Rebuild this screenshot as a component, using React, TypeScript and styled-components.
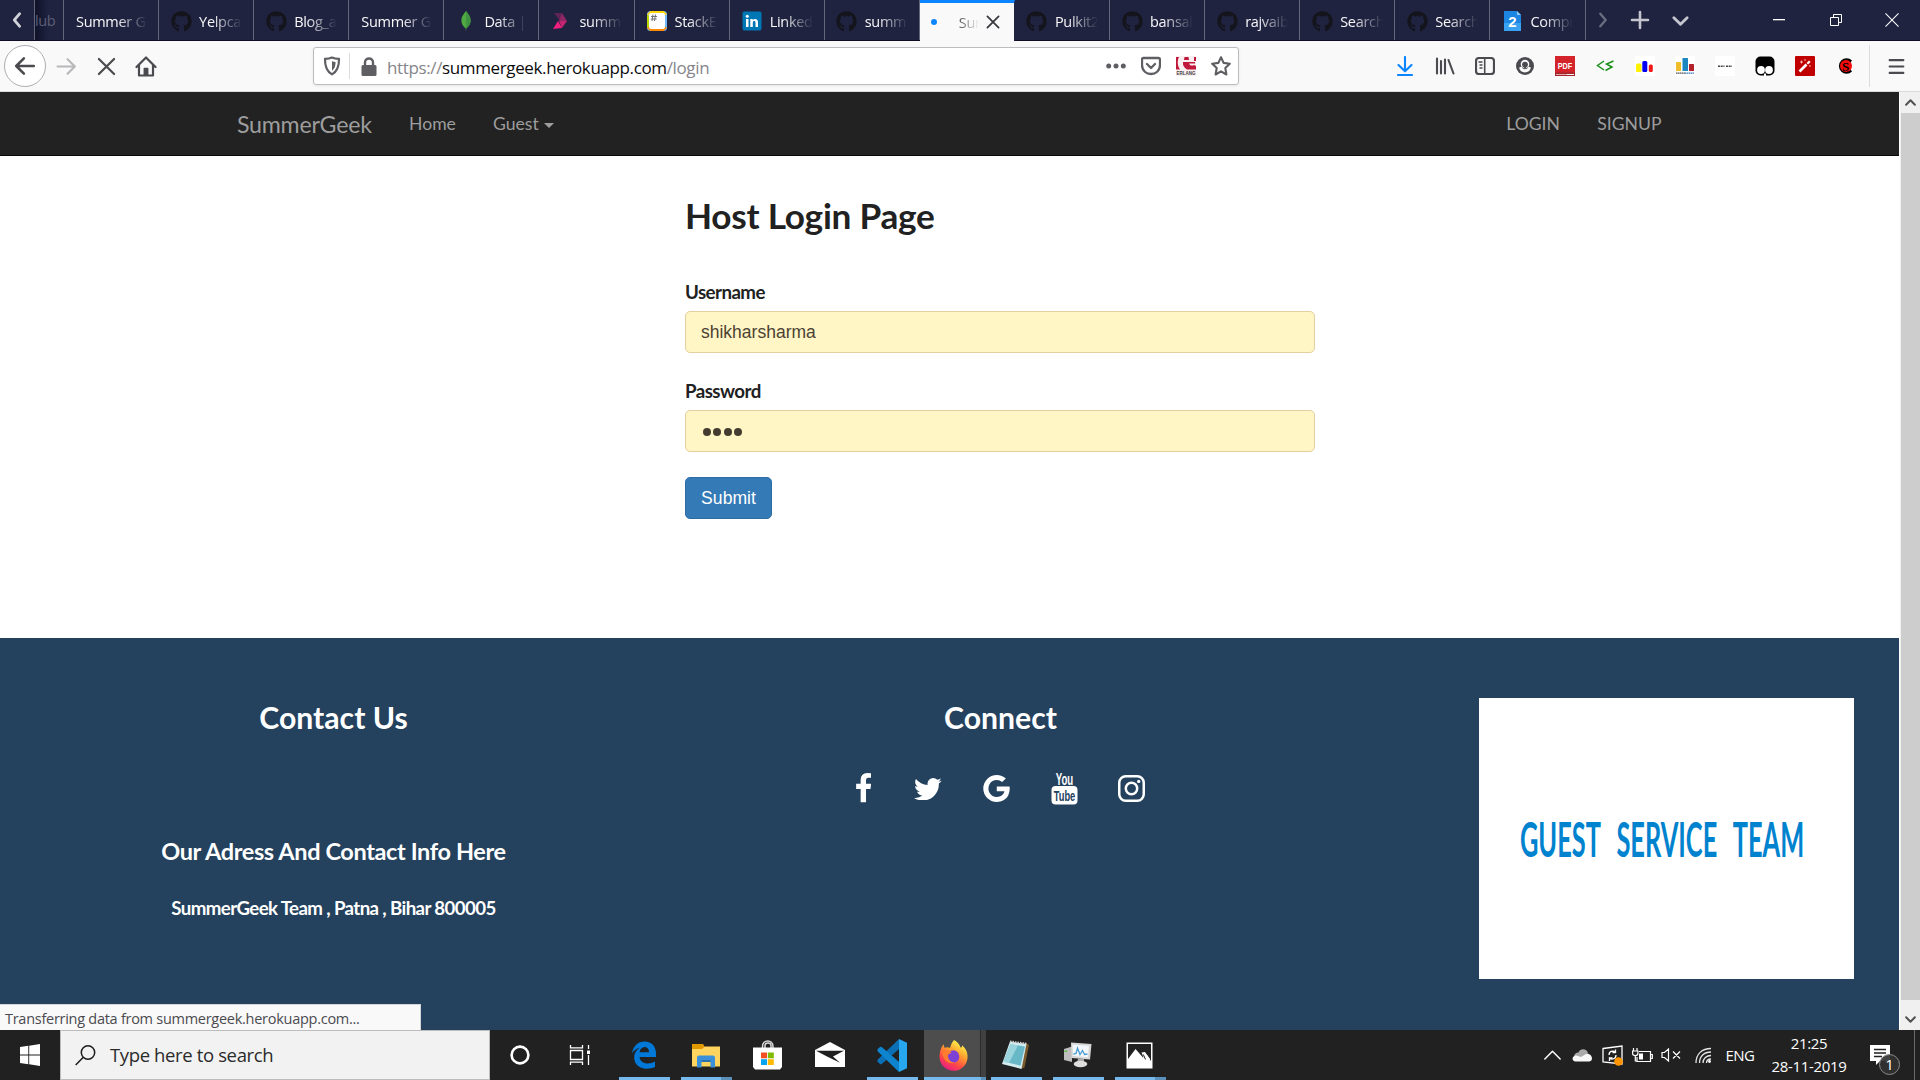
import React from "react";
import styled, { createGlobalStyle } from "styled-components";
import { FaGithub } from "react-icons/fa";

const ui = `"Open Sans", "Noto Sans", sans-serif`;

const Global = createGlobalStyle`
  * { box-sizing: border-box; }
  html, body { margin: 0; padding: 0; overflow: hidden; }
  body { font-family: ${ui}; background: #fff; }
  svg { display: block; flex: none; }
`;

const Screen = styled.div`
  width: 1920px;
  height: 1080px;
  display: flex;
  flex-direction: column;
  overflow: hidden;
`;

/* ---------- tab strip ---------- */
const TabStrip = styled.div`
  height: 41px;
  flex: none;
  display: flex;
  background: #202340;
  border-bottom: 1px solid #0d0d24;
`;
const ScrollLeft = styled.div`
  width: 35px;
  flex: none;
  display: flex;
  align-items: center;
  justify-content: center;
  border-right: 1px solid #64667a;
`;
const Stub = styled.div`
  width: 29px;
  flex: none;
  border-right: 1px solid #64667a;
  background: linear-gradient(90deg, #10122a, #202340 14px);
  color: #5d5f78;
  font-size: 14.5px;
  line-height: 42px;
  overflow: hidden;
  letter-spacing: -0.4px;
`;
const Tab = styled.div<{ $active?: boolean }>`
  width: 95.1px;
  flex: none;
  height: ${(p) => (p.$active ? 41 : 40)}px;
  display: flex;
  align-items: center;
  padding-left: 12px;
  padding-top: ${(p) => (p.$active ? 0 : 2)}px;
  background: ${(p) => (p.$active ? "#f9f9fa" : "transparent")};
  border-top: ${(p) => (p.$active ? "3px solid #0a84ff" : "0")};
  border-right: 1px solid ${(p) => (p.$active ? "#202340" : "#64667a")};
  color: ${(p) => (p.$active ? "#555" : "#f9f9fa")};
`;
const Favicon = styled.span`
  width: 20px;
  height: 20px;
  margin-right: 8px;
  flex: none;
  display: flex;
  align-items: center;
  justify-content: center;
  color: #14141c;
`;
const TabLabel = styled.span<{ $w: number }>`
  width: ${(p) => p.$w}px;
  font-size: 14.5px;
  letter-spacing: -0.3px;
  line-height: 20px;
  padding-top: 1px;
  white-space: nowrap;
  overflow: hidden;
  mask-image: linear-gradient(90deg, #000 ${(p) => Math.max(0, p.$w - 30)}px, transparent ${(p) => p.$w}px);
`;
const StripTools = styled.div`
  flex: 1;
  display: flex;
  align-items: center;
`;
const Slot = styled.div<{ $w: number }>`
  width: ${(p) => p.$w}px;
  flex: none;
  display: flex;
  align-items: center;
  justify-content: center;
`;

/* ---------- toolbar ---------- */
const Toolbar = styled.div`
  height: 51px;
  flex: none;
  display: flex;
  align-items: center;
  background: #f9f9fa;
  border-bottom: 1px solid #d9d9db;
  padding-left: 4px;
`;
const BackButton = styled.div`
  width: 42px;
  height: 42px;
  flex: none;
  border-radius: 50%;
  border: 1px solid #aeaeb0;
  background: #fff;
  display: flex;
  align-items: center;
  justify-content: center;
`;
const UrlBar = styled.div`
  width: 926px;
  height: 38px;
  margin-left: 147px;
  flex: none;
  display: flex;
  align-items: center;
  background: #fff;
  border: 1px solid #bdbdbf;
  border-radius: 3px;
  box-shadow: 0 1px 3px rgba(0, 0, 0, 0.08);
`;
const Divider = styled.div<{ $h: number }>`
  width: 1px;
  height: ${(p) => p.$h}px;
  background: #dcdcde;
`;
const Url = styled.div`
  flex: 1;
  font-size: 17px;
  letter-spacing: -0.37px;
  line-height: 24px;
  padding-top: 3px;
  color: #85858a;
  white-space: nowrap;
  b { font-weight: 400; color: #0c0c0d; }
`;
const Extensions = styled.div`
  margin-left: 146px;
  flex: none;
  display: flex;
  align-items: center;
`;

/* ---------- page ---------- */
const Viewport = styled.div`
  flex: 1;
  display: flex;
  min-height: 0;
  font-family: Lato, sans-serif;
`;
const Page = styled.div`
  width: 1899px;
  position: relative;
  display: flex;
  flex-direction: column;
  background: #fff;
`;
const Scrollbar = styled.div`
  width: 21px;
  background: #f0f0f0;
  display: flex;
  flex-direction: column;
  align-items: center;
  border-left: 1px solid #fff;
`;
const ScrollArrow = styled.div<{ $bottom?: boolean }>`
  height: 21px;
  display: flex;
  align-items: center;
  margin-top: ${(p) => (p.$bottom ? "auto" : 0)};
`;
const Thumb = styled.div`
  width: 19px;
  height: 887px;
  background: #cdcdcd;
`;
const Navbar = styled.nav`
  height: 64px;
  flex: none;
  display: flex;
  align-items: center;
  background: #222;
  border-bottom: 1px solid #080808;
  color: #9d9d9d;
  font-size: 17.6px;
  padding: 0 236px 0 237px;
`;
const Brand = styled.div`
  font-size: 23.2px;
  letter-spacing: -0.25px;
  width: 172px;
`;
const NavItem = styled.div<{ $w?: number }>`
  width: ${(p) => (p.$w ? p.$w + "px" : "auto")};
  display: flex;
  align-items: center;
`;
const Caret = styled.span`
  margin-left: 5px;
  margin-top: 3px;
  border: 5px solid transparent;
  border-top-color: #9d9d9d;
  border-bottom: 0;
`;
const Main = styled.main`
  height: 482px;
  flex: none;
  padding: 37px 0 0 685px;
  color: #212121;
`;
const Title = styled.h2`
  margin: 0 0 43px;
  font-size: 35.2px;
  letter-spacing: -0.25px;
  line-height: 44px;
  font-weight: 700;
`;
const Label = styled.label`
  display: block;
  font-size: 18.7px;
  letter-spacing: -0.55px;
  line-height: 24px;
  font-weight: 700;
  margin-bottom: 7px;
`;
const Field = styled.div`
  width: 630px;
  height: 42px;
  margin-bottom: 26px;
  padding: 0 15px;
  display: flex;
  align-items: center;
  border: 1px solid #e6cf9f;
  border-radius: 5px;
  background: #fff5c5;
  color: #4c4233;
  font: 17.5px "Liberation Sans", Arial, sans-serif;
`;
const Dots = styled.div`
  display: flex;
  gap: 2.4px;
  padding: 2px 0 0 2px;
  i { width: 8px; height: 8px; border-radius: 50%; background: #443c30; }
`;
const Submit = styled.button`
  width: 87px;
  height: 42px;
  margin-top: -1px;
  padding: 0;
  display: block;
  border: 1px solid #2e6da4;
  border-radius: 5px;
  background: #337ab7;
  color: #fff;
  font: 17.6px "Liberation Sans", Arial, sans-serif;
`;
const Footer = styled.footer`
  flex: 1;
  display: grid;
  grid-template-columns: 667px 667px 1fr;
  background: #24415d;
  color: #fff;
  text-align: center;
`;
const Column = styled.div`
  padding-top: 60px;
`;
const H3 = styled.h3`
  margin: -1px 0 0;
  font-size: 30.2px;
  line-height: 40px;
  font-weight: 700;
`;
const H4 = styled.h4`
  margin: 98px 0 0;
  font-size: 23.5px;
  letter-spacing: -0.38px;
  line-height: 32px;
  font-weight: 700;
`;
const H5 = styled.h5`
  margin: 29px 0 0;
  font-size: 18.7px;
  letter-spacing: -0.62px;
  line-height: 24px;
  font-weight: 700;
`;
const Social = styled.div`
  display: flex;
  align-items: center;
  padding: 34px 0 0 188.5px;
  height: 68px;
`;
const SocialIcon = styled.div<{ $gap: number; $top?: number }>`
  margin-right: ${(p) => p.$gap}px;
  margin-top: ${(p) => p.$top ?? 0}px;
  fill: #fff;
`;
const TeamCard = styled.div`
  width: 375px;
  height: 281px;
  margin-left: 145px;
  background: #fff;
  display: flex;
  align-items: center;
  justify-content: center;
`;
const TeamName = styled.div`
  color: #0083cf;
  font: 700 30px/40px Lato, sans-serif;
  white-space: nowrap;
  word-spacing: 12px;
  transform: translate(-4px, -1.5px) scale(0.846, 1.62);
`;
const Status = styled.div`
  position: absolute;
  left: 0;
  bottom: 0;
  width: 421px;
  height: 26px;
  padding-left: 5px;
  background: #f9f9fa;
  border-top: 1px solid #d5d5d7;
  border-right: 1px solid #d5d5d7;
  color: #4a4a4f;
  font: 14.5px/27px ${ui};
  letter-spacing: -0.27px;
`;

/* ---------- taskbar ---------- */
const Taskbar = styled.div`
  height: 50px;
  flex: none;
  display: flex;
  background: #212121;
  color: #fff;
`;
const Search = styled.div`
  width: 430px;
  height: 50px;
  display: flex;
  align-items: center;
  padding-left: 14px;
  background: #f2f2f2;
  border: 1px solid #bcbcbc;
  color: #2b2b2b;
  font-size: 18.5px;
  letter-spacing: -0.37px;
  span { margin-left: 14px; margin-top: -1px; }
`;
const TaskButton = styled.div<{ $active?: boolean }>`
  width: 62px;
  height: 50px;
  flex: none;
  display: flex;
  flex-direction: column;
  align-items: center;
  background: ${(p) =>
    p.$active ? "linear-gradient(90deg, #4d4d4d 56px, #2c2c2c 56px, #2c2c2c 57px, #404040 57px)" : "transparent"};
`;
const Glyph = styled.div`
  height: 47px;
  padding: 3px 2px 0 0;
  display: flex;
  align-items: center;
`;
const Underline = styled.div<{ $w: number; $split?: number }>`
  width: ${(p) => p.$w}px;
  height: 3px;
  background: linear-gradient(90deg, #76b9ed ${(p) => p.$split ?? p.$w}px, #5a90ba ${(p) => p.$split ?? p.$w}px);
`;
const Tray = styled.div`
  margin-left: auto;
  display: flex;
  align-items: center;
`;
const Lang = styled.div`
  width: 40px;
  font-size: 15px;
  letter-spacing: -0.5px;
  text-align: center;
`;
const Clock = styled.div`
  width: 92px;
  margin-left: 3px;
  text-align: center;
  font-size: 15px;
  line-height: 23px;
  letter-spacing: -0.35px;
`;
const Notice = styled.div`
  position: relative;
  width: 36px;
  height: 50px;
  margin-left: 14px;
  padding: 15px 0 0 1px;
`;
const Badge = styled.div`
  position: absolute;
  left: 10px;
  top: 24px;
  width: 21px;
  height: 21px;
  border-radius: 50%;
  border: 1px solid #8b8b8b;
  background: rgba(50, 50, 50, 0.92);
  font-size: 15px;
  line-height: 19px;
  text-align: center;
`;
const Peek = styled.div`
  width: 6px;
  height: 50px;
  margin-left: 9px;
  border-left: 1px solid #6a6a6a;
`;

type G = { d: string; s?: number; w?: number; c?: string };
/* Stroked line icon on a 20 unit grid. */
const Line = ({ d, s = 20, w = 2, c = "#4a4a4f" }: G) => (
  <svg width={s} height={s} viewBox="0 0 20 20" fill="none" stroke={c} strokeWidth={w} strokeLinecap="round" strokeLinejoin="round">
    <path d={d} />
  </svg>
);

const Github = () => <FaGithub size={21} />;
const Mongo = () => (
  <svg width="12" height="20" viewBox="0 0 12 20">
    <path d="M6 0C8 3 10.600 5 10.600 9.500C10.600 13.500 8 16 6.400 17.200L6 20L5.600 17.200C4 16 1.400 13.500 1.400 9.500C1.400 5 4 3 6 0Z" fill="#4faa41" />
    <path d="M6 0C8 3 10.600 5 10.600 9.500C10.600 13.500 8 16 6.300 17.200Z" fill="#3f9143" />
  </svg>
);
const Pink = () => (
  <svg width="18" height="18" viewBox="0 0 18 18">
    <path d="M2 1L10 1L8 9Z" fill="#5d2455" />
    <path d="M10 1L15 9H7Z" fill="#8e2764" />
    <path d="M7 9H15L10 16Z" fill="#c42472" />
    <path d="M1 17L6 9L10 16Z" fill="#f0207f" />
  </svg>
);
const StackEdit = () => (
  <svg width="20" height="20" viewBox="0 0 20 20">
    <rect width="20" height="20" rx="3.500" fill="#75b7fd" />
    <path d="M3.500 0H16.500L20 3L10 10L0 3Z" fill="#ffd700" />
    <path d="M0 3.500V16.500L3 20L9 10Z" fill="#bbd500" />
    <path d="M3.500 20H16.500L20 17L10 10L0 17Z" fill="#ff8a00" />
    <rect x="2" y="2" width="16" height="16" rx="2" fill="#fff" />
    <path d="M6 3.500L5 10M8.500 3.500L7.500 10M4 5.500H10M3.700 8H9.700" stroke="#737373" strokeWidth="1" />
  </svg>
);
const LinkedIn = () => (
  <svg width="20" height="20" viewBox="0 0 20 20">
    <rect x=".5" y=".5" width="19" height="19" rx="2" fill="#0077b5" />
    <path d="M4 8H6.500V16H4ZM8.300 8H10.700V9.200C12 7.200 16 7.300 16 11V16H13.500V11.700C13.500 9.200 10.800 9.500 10.800 11.700V16H8.300Z" fill="#fff" />
    <circle cx="5.250" cy="5.200" r="1.500" fill="#fff" />
  </svg>
);
const Two = () => (
  <svg width="17" height="20" viewBox="0 0 17 20">
    <path d="M0 0H13L17 4V20H0Z" fill="#1d86e3" />
    <path d="M0 12H17V20H0Z" fill="#3aa2f2" />
    <path d="M13 0V4H17Z" fill="#8cc8f8" />
    <text x="8.500" y="15.500" textAnchor="middle" fontFamily="Liberation Sans" fontWeight="700" fontSize="15" fill="#fff">2</text>
  </svg>
);

const tabsBefore: [string, React.FC | null][] = [
  ["Summer Geek", null], ["Yelpcamp", Github], ["Blog_app", Github], ["Summer Geek", null],
  ["Data | Mongo", Mongo], ["summergeek", Pink], ["StackEdit", StackEdit], ["LinkedIn", LinkedIn], ["summergeek", Github],
];
const tabsAfter: [string, React.FC | null][] = [
  ["Pulkit2110", Github], ["bansal-x", Github], ["rajvaibhav", Github], ["Search", Github], ["Search", Github], ["Compress", Two],
];
const renderTabs = (list: [string, React.FC | null][]) =>
  list.map(([label, Icon], i) => (
    <Tab key={i}>
      {Icon && <Favicon><Icon /></Favicon>}
      <TabLabel $w={Icon ? 43 : 71}>{label}</TabLabel>
    </Tab>
  ));

const Shield = () => (
  <svg width="18" height="20" viewBox="0 0 18 20">
    <path d="M9 1.500C11 2.500 14 2.800 16 2.800C16.200 10 15 15 9 18.400C3 15 1.800 10 2 2.800C4 2.800 7 2.500 9 1.500Z" fill="none" stroke="#5f5f63" strokeWidth="2.200" strokeLinejoin="round" />
    <path d="M9 5.200C10.200 5.700 11.500 5.900 12.600 6C12.500 10 11.600 12.800 9 14.700Z" fill="#5f5f63" />
  </svg>
);
const Lock = () => (
  <svg width="16" height="19" viewBox="0 0 16 19">
    <path d="M4 9V5.500C4 .2 12 .2 12 5.500V9" fill="none" stroke="#5f5f63" strokeWidth="2.400" />
    <rect x=".5" y="8" width="15" height="11" rx="1.500" fill="#5f5f63" />
  </svg>
);
const Pocket = () => (
  <Line w={2.3} c="#5f5f63" d="M2.500 2H17.500Q19 2 19 3.500V9C19 21 1 21 1 9V3.500Q1 2 2.500 2ZM6 8L10 12L14 8" />
);
const Erlang = () => (
  <svg width="20" height="20" viewBox="0 0 20 20">
    <rect width="20" height="20" fill="#fbeef0" />
    <path d="M0 1H3C1 5 1.500 10 4 13.500H0ZM18 1H20V5H18ZM8.500 1H12.500L13 4H8ZM7 6H19V7.500H13C14 10 17 10 18 9L20 10V13.500H11C8 12 6.500 9 7 6Z" fill="#c0183a" />
    <text x="10" y="19" textAnchor="middle" fontFamily="Liberation Sans" fontWeight="700" fontSize="5.200" textLength="19" lengthAdjust="spacingAndGlyphs" fill="#444">ERLANG</text>
  </svg>
);
const Bars = ({ c, labelled }: { c: string[]; labelled?: boolean }) => (
  <svg width="20" height="20" viewBox="0 0 20 20">
    <rect width="20" height="20" fill="#fff" />
    {labelled ? (
      <>
        <rect x="1" y="6" width="5" height="9" rx=".6" fill={c[0]} />
        <rect x="7.500" y="2" width="5.500" height="13" rx=".6" fill={c[1]} />
        <rect x="14" y="8" width="5" height="7" rx=".6" fill={c[2]} />
        <path d="M1 17.200H10" stroke="#555" strokeWidth="1.300" strokeDasharray="1.500 .4" />
        <path d="M10 17.200H19" stroke="#3b7fc0" strokeWidth="1.300" strokeDasharray="1.500 .4" />
      </>
    ) : (
      <>
        <rect x="1" y="7.500" width="5.500" height="8.500" rx="1.500" fill={c[0]} />
        <rect x="7.300" y="5" width="5" height="11" rx="1.500" fill={c[1]} />
        <rect x="13.800" y="8.500" width="4" height="7.500" rx="1.500" fill={c[2]} />
      </>
    )}
  </svg>
);

const exts: React.ReactNode[] = [
  <Line c="#0a84ff" w={2.1} d="M10 1V15M3.500 9L10 15.300L16.500 9M3 19H17" />,
  <svg width="20" height="18" viewBox="0 0 20 18" fill="none" stroke="#4a4a4f" strokeWidth="2.100" strokeLinecap="round">
    <path d="M2 1.500V16.500M6 4V16.500M10 2.500V16.500M13.500 3L18.500 16.500" />
  </svg>,
  <svg width="20" height="18" viewBox="0 0 20 18" fill="none" stroke="#4a4a4f">
    <rect x="1" y="1" width="18" height="16" rx="3" strokeWidth="2.200" />
    <path d="M9.700 1V17" strokeWidth="1.600" />
    <path d="M3.500 5H7.500M4.500 8H7.500M4.500 11H7.500" strokeWidth="1.300" />
  </svg>,
  <svg width="18" height="18" viewBox="0 0 18 18">
    <circle cx="9" cy="9" r="9" fill="#4a4a4f" />
    <path d="M3.200 10.500L5.600 9.500L6.500 11.300Q9 13 11.500 11.300L12.400 9.500L14.800 10.500C14 17 4 17 3.200 10.500Z" fill="#f9f9fa" />
    <circle cx="9" cy="7" r="4.300" fill="#f9f9fa" />
    <circle cx="9" cy="7.600" r="2.900" fill="#4a4a4f" />
    <path d="M7.200 9.500H10.800L9 11.800Z" fill="#4a4a4f" />
  </svg>,
  <svg width="20" height="20" viewBox="0 0 20 20">
    <rect width="20" height="20" fill="#d3232b" />
    <rect y="16.500" width="20" height="3.500" fill="#a3262c" />
    <path d="M1 18.500H12" stroke="#e9a5a8" strokeWidth="1" />
    <path d="M12 18.500H19" stroke="#fff" strokeWidth="1" />
    <text x="10" y="12.500" textAnchor="middle" fontFamily="Liberation Sans" fontWeight="700" fontSize="9.500" textLength="14.500" lengthAdjust="spacingAndGlyphs" fill="#fff">PDF</text>
  </svg>,
  <svg width="18" height="12" viewBox="0 0 18 12" fill="none" stroke="#1a8f1a" strokeWidth="1.500">
    <path d="M8 1L1.500 5.500L8 10M17.500 1L10.500 4L16 7L9.500 10.500" />
  </svg>,
  <Bars c={["#fff200", "#0000f5", "#f01818"]} />,
  <Bars labelled c={["#efbd27", "#1d87c2", "#b3202a"]} />,
  <svg width="20" height="20" viewBox="0 0 20 20">
    <rect width="20" height="20" fill="#fff" />
    <path d="M3 10.300H9.500M11 10.300H17" stroke="#444" strokeWidth="1.400" strokeDasharray="2 .7" />
  </svg>,
  <svg width="20" height="20" viewBox="0 0 20 20">
    <rect x=".5" y=".5" width="19" height="19" rx="5" fill="#000" />
    <circle cx="6" cy="14" r="3.900" fill="#fff" />
    <circle cx="14" cy="14" r="3.900" fill="#fff" />
    <path d="M9 17.500H11V20H9Z" fill="#fff" />
  </svg>,
  <svg width="20" height="20" viewBox="0 0 20 20">
    <rect width="20" height="20" rx="1" fill="#c00000" />
    <path d="M4.500 15.500L11.500 8.500" stroke="#fff" strokeWidth="2.600" />
    <path d="M12.300 7.700L14.800 5.200" stroke="#fff" strokeWidth="2.300" />
    <path d="M5 6H8M6.500 4.500V7.500M10 3V5M15 9V11" stroke="#f3b9b9" strokeWidth="1" />
  </svg>,
  <svg width="18" height="20" viewBox="0 0 18 20">
    <path d="M16 4.500A7.700 7.700 0 1 0 16 15.500L12 10Z" fill="#000" />
    <circle cx="10" cy="10" r="6" fill="#f50a0a" />
    <text x="9.500" y="14.500" textAnchor="middle" fontFamily="Liberation Serif" fontWeight="700" fontSize="13" fill="#000">S</text>
  </svg>,
];

const FB = "M1343 12v264h-157q-86 0-116 36t-30 108v189h293l-39 296h-254v759h-306v-759h-255v-296h255v-218q0-186 104-288.500t277-102.500q147 0 228 12z";
const TW = "M1684 408q-67 98-162 167 1 14 1 42 0 130-38 259.500t-115.500 248.500-184.500 210.500-258 146-323 54.500q-271 0-496-145 35 4 78 4 225 0 401-138-105-2-188-64.500t-114-159.500q33 5 61 5 43 0 85-11-112-23-185.500-111.500t-73.500-205.500v-4q68 38 146 41-66-44-105-115t-39-154q0-88 44-163 121 149 294.500 238.500t371.500 99.500q-8-38-8-74 0-134 94.500-228.500t228.500-94.500q140 0 236 102 109-21 205-78-37 115-142 178 93-10 186-50z";
const GO = "M896 786h725q12 67 12 128 0 217-91 387.500t-259.500 266.500-386.500 96q-157 0-299-60.500t-245-163.500-163.500-245-60.500-299 60.500-299 163.500-245 245-163.500 299-60.500q300 0 515 201l-209 201q-123-119-306-119-129 0-238.500 65t-173.500 176.500-64 243.500 64 243.500 173.500 176.500 238.500 65q87 0 160-24t120-60 82-82 51.500-87 22.500-78h-436v-264z";

/* ---------- taskbar glyphs ---------- */
const Edge = () => (
  <svg width="26" height="28" viewBox="0 0 26 28">
    <path d="M1 12.500C2 5 7 .5 13.500 .5C21 .5 25 6 25 12.500V16H8.500C9 20.500 13 22.500 16.500 22.500C19.500 22.500 22 21.700 24 20.500V26C21.500 27.200 18.500 27.700 15.500 27.700C8 27.700 3.200 23 3.200 16.500C3.200 12 5.500 8.500 9 6.700C5.500 7.200 2.800 9.300 1 12.500ZM8.600 11.200H18C18 8 16.500 6 13.500 6C11 6 9 8.200 8.600 11.200Z" fill="#0078d7" />
  </svg>
);
const Folder = () => (
  <svg width="28" height="25" viewBox="0 0 28 25">
    <path d="M0 1H11L13 4H27.500V22.500H0Z" fill="#e09a00" />
    <path d="M0 6H10L13 3.500H28V23.500H0Z" fill="#ffd45f" />
    <path d="M5 14.500Q5 12.500 7 12.500H21Q23 12.500 23 14.500V24.500H18.500V19H9.500V24.500H5Z" fill="#3a91d9" />
    <path d="M9.500 17H18.500V19H9.500Z" fill="#2b70b0" />
  </svg>
);
const Store = () => (
  <svg width="29" height="30" viewBox="0 0 29 30">
    <path d="M9.500 9V6.500C9.500 -.8 20 -.8 20 6.500V9M12 8V5.500C12 2 18 2 18 5.500V8" fill="none" stroke="#d8d8d8" strokeWidth="1.500" />
    <path d="M0 7.500H29V27L27 29.500H2L0 27Z" fill="#fff" />
    <path d="M8 12.500H14V18.300H8Z" fill="#f25022" />
    <path d="M14.800 12.500H20.800V18.300H14.800Z" fill="#7fba00" />
    <path d="M8 19.200H14V25H8Z" fill="#00a4ef" />
    <path d="M14.800 19.200H20.800V25H14.800Z" fill="#ffb900" />
  </svg>
);
const Mail = () => (
  <svg width="30" height="26" viewBox="0 0 30 26">
    <path d="M0 8L15 0L30 8V25H0Z" fill="#fff" />
    <path d="M1 8.700H29L18 14.500L25 20.800L12.500 14.800Z" fill="#1f1f1f" />
  </svg>
);
const Code = () => (
  <svg width="30" height="33" viewBox="0 0 30 30" preserveAspectRatio="none">
    <path d="M22 0L1 18.500Q-.3 20 1 21.200L3 22.800Q4 23.300 5 22.500L23 8.500Z" fill="#0a6fb4" />
    <path d="M22 30L1 11.500Q-.3 10 1 8.800L3 7.200Q4 6.700 5 7.500L23 21.500Z" fill="#0d84cd" />
    <path d="M22 0L30 3.500V26.500L22 30V8Z" fill="#27a7f0" />
  </svg>
);
const Firefox = () => (
  <svg width="29" height="31" viewBox="0 0 29 29" preserveAspectRatio="none">
    <defs>
      <linearGradient id="fx" x1=".8" y1="0" x2=".25" y2="1">
        <stop offset=".1" stopColor="#fff04a" />
        <stop offset=".4" stopColor="#ffa02e" />
        <stop offset=".7" stopColor="#ff4a45" />
        <stop offset="1" stopColor="#e5168c" />
      </linearGradient>
    </defs>
    <path d="M15 0C19 2 21 5 21.500 7C23 7.500 23 6 23.200 5C27 8.500 29 12 28.500 17C27.500 24 22 28.800 14.500 28.800C6.500 28.800 .5 23 .5 15.500C.5 11 2 7 4.500 4L5.500 7.200C8 6.500 9.500 6.500 11 7.500C12 4 13 2 15 0Z" fill="url(#fx)" />
    <circle cx="14.500" cy="15.500" r="5.800" fill="#7d42d5" />
    <path d="M3 10.500C7 8.500 9 10 12.500 11.300C12 13 9.500 12.500 9 14.500C9 19 12.500 21.500 16 20.500C11 24 4 20 3 10.500Z" fill="#ff7d2e" />
  </svg>
);
const Notepad = () => (
  <svg width="29" height="30" viewBox="0 0 29 28" preserveAspectRatio="none">
    <path d="M24 3L28 4.500L23.500 26L19 27Z" fill="#7a5a2a" />
    <path d="M9 1.500L25.500 3.500L20.500 27L1 22.500Z" fill="#d4edf1" />
    <path d="M9.500 4L24 6L19.500 24L2.500 20Z" fill="#69b8c8" />
    <path d="M9.500 4L17 5L8 21.500L2.500 20Z" fill="#9bd4dd" />
    <path d="M9 1.500L25.500 3.500" stroke="#cfcfcf" strokeWidth="2" strokeDasharray="1.500 1" />
  </svg>
);
const Monitor = () => (
  <svg width="28" height="26" viewBox="0 0 28 26">
    <path d="M0 7L8 4.500V20L0 18Z" fill="#bdbdbd" />
    <path d="M.5 8.500H3V10H.5Z" fill="#55c234" />
    <path d="M7 .5L27.500 2L26 17.500L7.500 16Z" fill="#d6d6d6" />
    <path d="M8.500 2.500L25 3.700L24 15.300L9 14Z" fill="#f1f7fb" />
    <path d="M9.500 12L12 11.500L13.500 6L16 12.500L18.500 8.500L20.500 12.500L23.500 12" fill="none" stroke="#4c9cd3" strokeWidth="1.300" />
    <path d="M14 16.500L20 17V21L13 21.500Z" fill="#aaa" />
    <ellipse cx="16.500" cy="22" rx="6.800" ry="3.300" fill="#dedede" />
  </svg>
);
const Photos = () => (
  <svg width="27" height="27" viewBox="0 0 27 27">
    <rect x=".5" y=".5" width="26" height="26" fill="#fff" />
    <path d="M2 2H25V19L21 13L17 15.500L9.500 7L2 17Z" fill="#212121" />
    <path d="M15.500 10.500L19 10L24 17V19.500L20.500 18L19 14.500L17.500 15.500Z" fill="#fff" />
    <path d="M17.300 12.500L19.500 17.500" stroke="#212121" strokeWidth="1" />
  </svg>
);

const apps: { icon: React.ReactNode; w?: number; split?: number; active?: boolean }[] = [
  { icon: <Edge />, w: 51 },
  { icon: <Folder />, w: 51, split: 40 },
  { icon: <Store /> },
  { icon: <Mail /> },
  { icon: <Code />, w: 51 },
  { icon: <Firefox />, w: 62, split: 57, active: true },
  { icon: <Notepad />, w: 51 },
  { icon: <Monitor />, w: 51 },
  { icon: <Photos />, w: 51, split: 40 },
];

export default function App() {
  return (
    <Screen>
      <Global />
      <TabStrip>
        <ScrollLeft><Line s={18} w={3} c="#d2d3da" d="M13 3L7 10L13 17" /></ScrollLeft>
        <Stub>lub</Stub>
        {renderTabs(tabsBefore)}
        <Tab $active>
          <Slot $w={5}><svg width="6" height="6"><circle cx="3" cy="3" r="3" fill="#0a84ff" /></svg></Slot>
          <Slot $w={22} />
          <TabLabel $w={20}>Summer</TabLabel>
          <Slot $w={28}><Line s={16} w={2.2} c="#38383d" d="M3 3L17 17M17 3L3 17" /></Slot>
        </Tab>
        {renderTabs(tabsAfter)}
        <StripTools>
          <Slot $w={35}><Line s={18} w={2.6} c="#6a6c80" d="M7 3L13 10L7 17" /></Slot>
          <Slot $w={38}><Line s={20} w={2.6} c="#c4c5ce" d="M10 2V18M2 10H18" /></Slot>
          <Slot $w={43}><Line s={19} w={3} c="#c4c5ce" d="M3 7L10 14L17 7" /></Slot>
          <Slot $w={48.5} />
          <Slot $w={57}><svg width="12" height="2"><rect width="12" height="1.300" fill="#fff" /></svg></Slot>
          <Slot $w={57}>
            <svg width="12" height="12" viewBox="0 0 12 12" fill="none" stroke="#fff" strokeWidth="1">
              <path d="M.5 3.500H8.500V11.500H.5ZM3.500 3V.5H11.500V8.500H9" />
            </svg>
          </Slot>
          <Slot $w={56}><Line s={14} w={1.5} c="#fff" d="M1 1L19 19M19 1L1 19" /></Slot>
        </StripTools>
      </TabStrip>

      <Toolbar>
        <BackButton><Line s={22} w={2.3} d="M2 10H18M9 3L2 10L9 17" /></BackButton>
        <Slot $w={40}><Line s={21} w={2} c="#b8b8bb" d="M1.500 10H18M11 3L18 10L11 17" /></Slot>
        <Slot $w={40}><Line s={19} w={2.3} d="M2 2L18 18M18 2L2 18" /></Slot>
        <Slot $w={40}>
          <svg width="22" height="21" viewBox="0 0 22 21" fill="none" stroke="#4a4a4f" strokeWidth="2.200" strokeLinejoin="round" strokeLinecap="round">
            <path d="M1.500 11L11 1.500L20.500 11M4 9V19.500H18V9" />
            <path d="M9.300 19V12.500H12.700V19" fill="#4a4a4f" strokeWidth="1.500" />
          </svg>
        </Slot>
        <UrlBar>
          <Slot $w={35}><Shield /></Slot>
          <Divider $h={26} />
          <Slot $w={37}><Lock /></Slot>
          <Url>https://<b>summergeek.herokuapp.com</b>/login</Url>
          <Slot $w={35}>
            <svg width="20" height="6" fill="#5f5f63"><circle cx="2.700" cy="3" r="2.500" /><circle cx="10" cy="3" r="2.500" /><circle cx="17.300" cy="3" r="2.500" /></svg>
          </Slot>
          <Slot $w={35}><Pocket /></Slot>
          <Slot $w={35}><Erlang /></Slot>
          <Slot $w={35}><Line w={2.1} c="#5f5f63" d="M10 1.300L12.600 6.900L18.800 7.700L14.300 12L15.400 18.500L10 15.300L4.600 18.500L5.700 12L1.200 7.700L7.400 6.900Z" /></Slot>
        </UrlBar>
        <Extensions>
          {exts.map((e, i) => <Slot key={i} $w={40}>{e}</Slot>)}
          <Slot $w={4} />
          <Divider $h={42} />
          <Slot $w={53}><Line s={17} w={2.6} d="M2 2.500H18M2 10H18M2 17.500H18" /></Slot>
        </Extensions>
      </Toolbar>

      <Viewport>
        <Page>
          <Navbar>
            <Brand>SummerGeek</Brand>
            <NavItem $w={84}>Home</NavItem>
            <NavItem>Guest<Caret /></NavItem>
            <Slot $w={952.5} />
            <NavItem $w={91}>LOGIN</NavItem>
            <NavItem>SIGNUP</NavItem>
          </Navbar>
          <Main>
            <Title>Host Login Page</Title>
            <Label>Username</Label>
            <Field>shikharsharma</Field>
            <Label>Password</Label>
            <Field><Dots><i /><i /><i /><i /></Dots></Field>
            <Submit>Submit</Submit>
          </Main>
          <Footer>
            <Column>
              <H3>Contact Us</H3>
              <H4>Our Adress And Contact Info Here</H4>
              <H5>SummerGeek Team , Patna , Bihar 800005</H5>
            </Column>
            <Column>
              <H3>Connect</H3>
              <Social>
                <SocialIcon $gap={43}><svg width="15.500" height="29.300" viewBox="479 0 864 1664"><path d={FB} /></svg></SocialIcon>
                <SocialIcon $gap={41} $top={2}><svg width="27.700" height="22.500" viewBox="108 256 1576 1280"><path d={TW} /></svg></SocialIcon>
                <SocialIcon $gap={41} $top={1}><svg width="27" height="27" viewBox="128 128 1505 1536"><path d={GO} /></svg></SocialIcon>
                <SocialIcon $gap={40.5} $top={1}>
                  <svg width="27" height="33" viewBox="0 0 27 33">
                    <rect x=".5" y="14" width="26" height="18.500" rx="4" />
                    <text x="13.500" y="12.500" textAnchor="middle" fontFamily="Liberation Sans Narrow, Liberation Sans" fontWeight="700" fontSize="16.500" textLength="17.500" lengthAdjust="spacingAndGlyphs">You</text>
                    <text x="13.500" y="28.800" textAnchor="middle" fontFamily="Liberation Sans Narrow, Liberation Sans" fontWeight="700" fontSize="15.500" textLength="21.500" lengthAdjust="spacingAndGlyphs" fill="#24415d">Tube</text>
                  </svg>
                </SocialIcon>
                <SocialIcon $gap={0} $top={1}>
                  <svg width="27" height="27" viewBox="0 0 27 27">
                    <rect x="1.250" y="1.250" width="24.500" height="24.500" rx="6.500" fill="none" stroke="#fff" strokeWidth="2.500" />
                    <circle cx="13.500" cy="13.500" r="5.700" fill="none" stroke="#fff" strokeWidth="2.500" />
                    <circle cx="20.700" cy="6.400" r="1.700" />
                  </svg>
                </SocialIcon>
              </Social>
            </Column>
            <Column>
              <TeamCard><TeamName>GUEST SERVICE TEAM</TeamName></TeamCard>
            </Column>
          </Footer>
          <Status>Transferring data from summergeek.herokuapp.com...</Status>
        </Page>
        <Scrollbar>
          <ScrollArrow><Line s={11} w={3.5} c="#505050" d="M2 14L10 6L18 14" /></ScrollArrow>
          <Thumb />
          <ScrollArrow $bottom><Line s={11} w={3.5} c="#505050" d="M2 6L10 14L18 6" /></ScrollArrow>
        </Scrollbar>
      </Viewport>

      <Taskbar>
        <Slot $w={60}>
          <svg width="20" height="22" viewBox="0 0 20 20" preserveAspectRatio="none" fill="#fff"><path d="M0 2.800L8.300 1.600V9.500H0ZM9.200 1.500L20 0V9.500H9.200ZM0 10.400H8.300V18.300L0 17.200ZM9.200 10.400H20V20L9.200 18.500Z" /></svg>
        </Slot>
        <Search>
          <svg width="21" height="21" viewBox="0 0 21 21" fill="none" stroke="#1c1c1c" strokeWidth="1.500"><circle cx="13" cy="7.500" r="6.700" /><path d="M8.300 12.300L.7 20" /></svg>
          <span>Type here to search</span>
        </Search>
        <Slot $w={60}><svg width="20" height="20"><circle cx="10" cy="10" r="8.400" fill="none" stroke="#fff" strokeWidth="2.600" /></svg></Slot>
        <Slot $w={60}>
          <svg width="22" height="20" viewBox="0 0 22 20" fill="none" stroke="#fff" strokeWidth="1.300">
            <path d="M1.500 5.500H13.500V14.500H1.500ZM1.500 0V2.800H13.500V0M1.500 20V17.200H13.500V20M19.500 0V4M19.500 10V20" />
            <path d="M18 5.500H21V9H18Z" fill="#fff" stroke="none" />
          </svg>
        </Slot>
        <Slot $w={3.5} />
        {apps.map((a, i) => (
          <TaskButton key={i} $active={a.active}>
            <Glyph>{a.icon}</Glyph>
            {a.w && <Underline $w={a.w} $split={a.split} />}
          </TaskButton>
        ))}
        <Tray>
          <Slot $w={40}><Line s={17} w={1.7} c="#fff" d="M1 14L10 5L19 14" /></Slot>
          <Slot $w={20}>
            <svg width="20" height="14" viewBox="0 0 20 14"><path d="M4 12C0 9 3 4 6.500 4.500C8 0 15 0 16 5L10 11Z" fill="#a9a9a9" /><path d="M3.500 13.500C-1 13 0 7.500 4.500 7.500L9 9L14 6C17 5 20 7.500 20 10.500C20 12.500 18.500 13.500 17 13.500Z" fill="#f7f7f7" /></svg>
          </Slot>
          <Slot $w={40}>
            <svg width="21" height="21" viewBox="0 0 21 21" fill="none" stroke="#fff" strokeWidth="1.300">
              <path d="M1 3.500L20 1V19L1 17Z" /><path d="M7 10C7 6 11 5.500 13.500 7V4.500M13.500 7.500H10.500M14 10C14 14 10 15 7.500 13V16M7.500 13H10.500" />
              <circle cx="16.500" cy="16.500" r="4.300" fill="#ff9500" stroke="none" />
            </svg>
          </Slot>
          <Slot $w={20}>
            <svg width="21" height="15" viewBox="0 0 21 15" fill="none" stroke="#fff" strokeWidth="1.200">
              <path d="M7 3.500H18.500V13.500H5V9M18.500 6.500H20.300V10.500H18.500M1.500 0V3M5 0V3M.6 3H5.900V5.500Q5.900 7.500 3.300 7.500Q.6 7.500 .6 5.500ZM3.300 7.500V13H5" /><path d="M7 5.500H11V11.500H7Z" fill="#fff" stroke="none" />
            </svg>
          </Slot>
          <Slot $w={38}>
            <svg width="20" height="14" viewBox="0 0 20 14" fill="none" stroke="#fff" strokeWidth="1.200"><path d="M1 4.500H3.500L7.500 1V13L3.500 9.500H1ZM12 3.500L19 10.500M19 3.500L12 10.500" /></svg>
          </Slot>
          <Slot $w={26}>
            <svg width="17" height="17" viewBox="0 0 17 17" fill="none" stroke="#e6e6e6" strokeWidth="1.300"><path d="M1 16C1 7 7 1.500 16 1.500M4.500 16C4.500 9.500 9 5 16 5M8 16C8 11.500 11.500 8.500 16 8.500M11.500 16C11.500 13.500 13 12 16 12" /><circle cx="14.500" cy="14.500" r="1.400" fill="#fff" stroke="none" /></svg>
          </Slot>
          <Slot $w={4} />
          <Lang>ENG</Lang>
          <Clock>21:25<br />28-11-2019</Clock>
          <Notice>
            <svg width="20" height="20" viewBox="0 0 20 20"><path d="M0 0H20V16H10L6 20V16H0Z" fill="#fff" /><path d="M4 4.500H16M4 8H16M4 11.500H12" stroke="#212121" strokeWidth="1.300" /></svg>
            <Badge>1</Badge>
          </Notice>
          <Peek />
        </Tray>
      </Taskbar>
    </Screen>
  );
}
